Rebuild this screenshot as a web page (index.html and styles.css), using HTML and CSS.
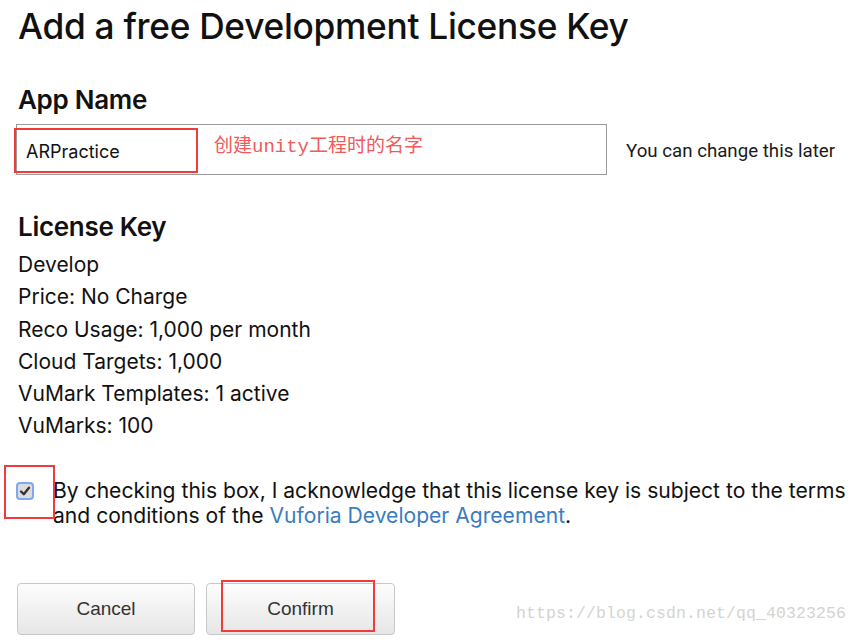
FILE: index.html
```html
<!DOCTYPE html>
<html lang="en">
<head>
  <meta charset="UTF-8" />
  <title>Add a free Development License Key</title>
  <link rel="stylesheet" href="styles.css">
</head>
<body>

  <h1>Add a free Development License Key</h1>

  <!-- App name -->
  <h2 class="app-heading">App Name</h2>
  <div class="name-row">
    <div class="name-field">
      <span class="name-value">ARPractice</span>
      <span class="note">创建unity工程时的名字</span>
      <span class="mark mark-name"></span>
    </div>
    <div class="hint">You can change this later</div>
  </div>

  <!-- License key -->
  <h2 class="key-heading">License Key</h2>
  <ul class="key-list">
    <li>Develop</li>
    <li>Price: No Charge</li>
    <li>Reco Usage: 1,000 per month</li>
    <li>Cloud Targets: 1,000</li>
    <li>VuMark Templates: 1 active</li>
    <li>VuMarks: 100</li>
  </ul>

  <div class="agree">
    <div class="check-wrap">
      <svg class="check" width="18" height="18" viewBox="0 0 18 18">
        <rect x="1" y="1" width="16" height="16" rx="3" fill="#dcdcdc" stroke="#7fa8f0" stroke-width="2"/>
        <path d="M5 9.5 L7.8 12.2 L13 5.8" fill="none" stroke="#333" stroke-width="2.4" stroke-linecap="round" stroke-linejoin="round"/>
      </svg>
      <span class="mark mark-check"></span>
    </div>
    <p class="agree-text">By checking this box, I acknowledge that this license key is subject to the terms and conditions of the <a href="#">Vuforia Developer Agreement</a>.</p>
  </div>

  <div class="actions">
    <button class="btn btn-cancel">Cancel</button>
    <button class="btn btn-confirm">Confirm<span class="mark mark-confirm"></span></button>
    <span class="watermark">https://blog.csdn.net/qq_40323256</span>
  </div>

</body>
</html>
```

FILE: styles.css
```css
:root {
  --text: #111;
  --link: #3a7cc0;
  --mark: #ef3b3b;
  --field-border: #9a9a9a;
}

body {
  margin: 0;
  padding: 0 0 0 18px;
  font-family: Inter, "Noto Sans", sans-serif;
  color: var(--text);
  background: #fff;
  width: 840px;
  overflow: hidden;
}

h1 {
  font-size: 35.3px;
  font-weight: 500;
  letter-spacing: -0.3px;
  margin: 0;
  padding-top: 6px;
  line-height: 42px;
}

h2 {
  font-size: 26px;
  font-weight: 600;
  letter-spacing: -0.3px;
  margin: 0;
  line-height: 32px;
}

.app-heading {
  margin-top: 36px;
}

/* App name row */
.name-row {
  display: flex;
  align-items: center;
  margin-top: 8px;
  margin-left: -2px;
}

.name-field {
  position: relative;
  width: 580px;
  height: 49px;
  border: 1px solid var(--field-border);
  display: flex;
  align-items: center;
  padding-left: 9px;
  box-sizing: content-box;
}

.name-value {
  font-size: 18px;
  width: 188px;
  padding-top: 4px;
}

.note {
  font-family: "Liberation Mono", "Noto Sans CJK SC", monospace;
  color: #f25a5a;
  font-size: 19px;
  margin-top: -12px;
}

.hint {
  font-family: Roboto, sans-serif;
  font-size: 18.7px;
  color: #1a1a1a;
  margin-left: 19px;
  padding-top: 2px;
}

.mark {
  position: absolute;
  border: 2px solid var(--mark);
  box-sizing: border-box;
}

.mark-name {
  left: -3px;
  top: 3px;
  width: 184px;
  height: 45px;
}

/* License key */
.key-heading {
  margin-top: 36px;
}

.key-list {
  list-style: none;
  margin: 6px 0 0;
  padding: 0;
  font-size: 21px;
  line-height: 32.3px;
}

.agree {
  display: flex;
  align-items: flex-start;
  margin-top: 35px;
}

.check-wrap {
  position: relative;
  width: 37px;
  padding-top: 4px;
  margin-left: -2px;
  flex-shrink: 0;
}

.check {
  display: block;
}

.mark-check {
  left: -12px;
  top: -13px;
  width: 51px;
  height: 54px;
}

.agree-text {
  margin: 0;
  font-size: 21.1px;
  line-height: 25px;
  max-width: 800px;
}

.agree-text a {
  color: var(--link);
  text-decoration: none;
}

/* Buttons */
.actions {
  position: relative;
  display: flex;
  gap: 11px;
  margin-top: 55px;
  margin-left: -1px;
}

.btn {
  position: relative;
  height: 52px;
  border: 1px solid #c8c8c8;
  border-radius: 4px;
  background: linear-gradient(#fdfdfd, #e6e6e6);
  font-family: "Liberation Sans", Arial, sans-serif;
  font-size: 19px;
  color: #333;
}

.btn-cancel {
  width: 178px;
}

.btn-confirm {
  width: 189px;
}

.mark-confirm {
  left: 14px;
  top: -4px;
  width: 154px;
  height: 52px;
}

.watermark {
  position: absolute;
  left: 499px;
  top: 21px;
  font-family: "Liberation Mono", monospace;
  font-size: 16.5px;
  color: #d4d4d0;
  letter-spacing: 0.1px;
}
```
